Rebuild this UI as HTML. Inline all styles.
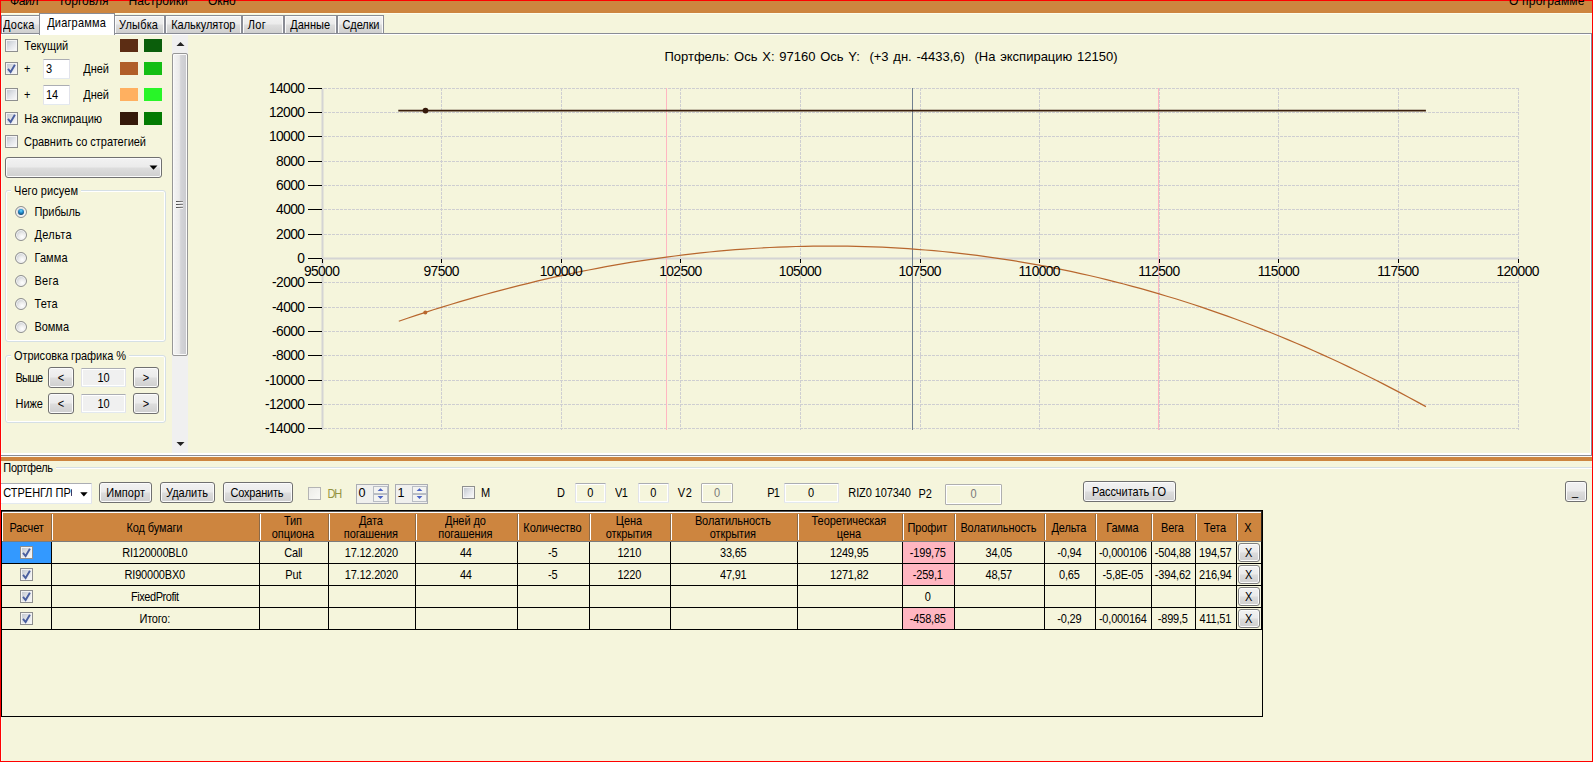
<!DOCTYPE html>
<html lang="ru">
<head>
<meta charset="utf-8">
<title>Портфель</title>
<style>
html,body{margin:0;padding:0;}
body{width:1593px;height:762px;overflow:hidden;background:#F5F5DC;font-family:"Liberation Sans",sans-serif;font-size:11px;color:#000;}
#root{position:relative;width:1593px;height:762px;overflow:hidden;background:#F5F5DC;}
#root div,#root span,#root svg{position:absolute;box-sizing:border-box;}
.t{white-space:pre;}
.btn{border:1px solid #707070;border-radius:3px;background:linear-gradient(#F2F2F2 0%,#EBEBEB 48%,#DDDDDD 52%,#CFCFCF 100%);box-shadow:inset 0 0 0 1px #FBFBFB;}
.tab{border:1px solid #898C95;border-bottom:none;background:linear-gradient(#F2F2F2 0%,#EBEBEB 48%,#DDDDDD 52%,#CFCFCF 100%);box-shadow:inset 1px 1px 0 0 #FBFBFB, inset -1px 0 0 0 #FBFBFB;}
.cb{width:13px;height:13px;border:1px solid #8E8F8F;background:#F4F4F4;box-shadow:inset 0 0 0 1px #F4F4F4;}
.cb i{position:absolute;left:1px;top:1px;width:9px;height:9px;background:linear-gradient(135deg,#C4C9D0 0%,#E4E6EA 55%,#F8F8F8 100%);box-sizing:border-box;}
.rb{width:12px;height:12px;border-radius:50%;border:1px solid #8E8F8F;background:radial-gradient(circle at 62% 68%,#FFFFFF 0%,#EBEBEB 38%,#BFC4CA 85%);box-shadow:inset 0 0 0 1px #F6F6F6;}
.tb{border:1px solid #E2E3EA;border-top-color:#ABADB3;border-bottom-color:#E3E9EF;background:#fff;border-radius:1px;}
.tbb{border:1px solid #E2E3EA;border-top-color:#ABADB3;border-bottom-color:#E3E9EF;background:#F5F5DC;border-radius:1px;box-shadow:inset 0 0 0 1px #FFFFFF;}
.tbd{border:1px solid #AFAFAF;background:#F5F5DC;border-radius:1px;box-shadow:inset 0 0 0 1px #FFFFFF;}
.sw{width:18px;height:13px;}
.gb{border:1px solid #D5DFE5;border-radius:3px;box-shadow:inset 0 0 0 1px #FFFFFF;}
.hl{background:#000;height:1px;}
.vl{background:#000;width:1px;}
</style>
</head>
<body>
<div id="root">
<div style="left:0;top:0;width:1593px;height:13px;background:#CD853F"></div>
<div style="left:1px;top:13px;width:1591px;height:1px;background:#FDFDEC"></div>
<div style="left:1px;top:33px;width:1591px;height:1px;background:#898C95"></div>
<div style="left:1px;top:34px;width:1590px;height:1px;background:#FFFFFF"></div>
<div style="left:1591px;top:33px;width:1px;height:423px;background:#898C95"></div>
<div style="left:1590px;top:34px;width:1px;height:421px;background:#FFFFFF"></div>
<div style="left:1px;top:453px;width:1590px;height:2px;background:#FFFFFF"></div>
<div style="left:1px;top:455px;width:1591px;height:1px;background:#898C95"></div>
<div style="left:1px;top:456px;width:1591px;height:1px;background:#FBFBF4"></div>
<div style="left:1px;top:457px;width:1591px;height:4px;background:#CD853F"></div>
<div style="left:1px;top:35px;width:1px;height:418px;background:#FAFAEE"></div>
<div style="left:1px;top:469px;width:1px;height:292px;background:#FAFAEE"></div>
<div class="tab" style="left:1px;top:15px;width:40px;height:18px"></div>
<div class="tab" style="left:114px;top:15px;width:51px;height:18px"></div>
<div class="tab" style="left:165px;top:15px;width:77px;height:18px"></div>
<div class="tab" style="left:242px;top:15px;width:42px;height:18px"></div>
<div class="tab" style="left:284px;top:15px;width:53px;height:18px"></div>
<div class="tab" style="left:337px;top:15px;width:47px;height:18px"></div>
<div style="left:39px;top:13px;width:76px;height:22px;background:#fff;border:1px solid #898C95;border-bottom:none"></div>
<div class="cb" style="left:5px;top:39px"><i></i></div>
<div class="sw" style="left:120px;top:39px;background:#5C2D14"></div>
<div class="sw" style="left:144px;top:39px;background:#0B5E0B"></div>
<div class="cb" style="left:5px;top:62px"><i></i><svg style="left:0;top:0" width="11" height="11" viewBox="0 0 11 11"><path d="M2.0 5.9 L4.6 9.0 L8.9 1.7" fill="none" stroke="#4A5F9F" stroke-width="1.9" stroke-linejoin="miter"/></svg></div>
<div class="tb" style="left:43px;top:59px;width:27px;height:20px"></div>
<div class="sw" style="left:120px;top:62px;background:#B05E28"></div>
<div class="sw" style="left:144px;top:62px;background:#14BE14"></div>
<div class="cb" style="left:5px;top:88px"><i></i></div>
<div class="tb" style="left:43px;top:85px;width:27px;height:20px"></div>
<div class="sw" style="left:120px;top:88px;background:#FFB060"></div>
<div class="sw" style="left:144px;top:88px;background:#28F528"></div>
<div class="cb" style="left:5px;top:112px"><i></i><svg style="left:0;top:0" width="11" height="11" viewBox="0 0 11 11"><path d="M2.0 5.9 L4.6 9.0 L8.9 1.7" fill="none" stroke="#4A5F9F" stroke-width="1.9" stroke-linejoin="miter"/></svg></div>
<div class="sw" style="left:120px;top:112px;background:#35190A"></div>
<div class="sw" style="left:144px;top:112px;background:#037B03"></div>
<div class="cb" style="left:5px;top:135px"><i></i></div>
<div class="btn" style="left:5px;top:157px;width:157px;height:21px"></div>
<svg style="left:149px;top:165px" width="9" height="6" viewBox="0 0 9 6"><path d="M0.5 0.5 L8.5 0.5 L4.5 4.8 Z" fill="#000"/></svg>
<div class="gb" style="left:5px;top:190px;width:161px;height:152px"></div>
<div style="left:11px;top:186px;width:70px;height:10px;background:#F5F5DC"></div>
<div class="rb" style="left:15px;top:206px"></div>
<div style="left:18px;top:209px;width:6px;height:6px;border-radius:50%;background:radial-gradient(circle at 50% 30%,#6FD8FF 0%,#2A9BDB 30%,#154C78 75%,#123D60 100%)"></div>
<div class="rb" style="left:15px;top:229px"></div>
<div class="rb" style="left:15px;top:252px"></div>
<div class="rb" style="left:15px;top:275px"></div>
<div class="rb" style="left:15px;top:298px"></div>
<div class="rb" style="left:15px;top:321px"></div>
<div class="gb" style="left:5px;top:355px;width:161px;height:68px"></div>
<div style="left:11px;top:351px;width:118px;height:10px;background:#F5F5DC"></div>
<div class="btn" style="left:48px;top:367px;width:26px;height:21px"></div>
<div class="tb" style="left:81px;top:368px;width:45px;height:19px;background:#F0F0F0;box-shadow:inset 0 0 0 1px #FFFFFF"></div>
<div class="btn" style="left:133px;top:367px;width:26px;height:21px"></div>
<div class="btn" style="left:48px;top:393px;width:26px;height:21px"></div>
<div class="tb" style="left:81px;top:394px;width:45px;height:19px;background:#F0F0F0;box-shadow:inset 0 0 0 1px #FFFFFF"></div>
<div class="btn" style="left:133px;top:393px;width:26px;height:21px"></div>
<div style="left:172px;top:35px;width:16px;height:418px;background:#F0F0F0"></div>
<div style="left:172px;top:53px;width:15.5px;height:303px;border:1px solid #979797;border-radius:2px;background:linear-gradient(90deg,#F5F5F5 0%,#EAEAEA 45%,#D4D4D8 55%,#C9CACE 100%);box-shadow:inset 0 0 0 1px #FAFAFA"></div>
<svg style="left:176px;top:41px" width="9" height="6" viewBox="0 0 9 6"><path d="M0.5 5 L4.5 1 L8.5 5 Z" fill="#222"/></svg>
<svg style="left:176px;top:441px" width="9" height="6" viewBox="0 0 9 6"><path d="M0.5 1 L4.5 5 L8.5 1 Z" fill="#222"/></svg>
<div style="left:176px;top:201px;width:7px;height:1px;background:linear-gradient(90deg,#4A4A4A,#8A8A8A)"></div>
<div style="left:176px;top:202px;width:7px;height:1px;background:#F4F4F4"></div>
<div style="left:176px;top:204px;width:7px;height:1px;background:linear-gradient(90deg,#4A4A4A,#8A8A8A)"></div>
<div style="left:176px;top:205px;width:7px;height:1px;background:#F4F4F4"></div>
<div style="left:176px;top:207px;width:7px;height:1px;background:linear-gradient(90deg,#4A4A4A,#8A8A8A)"></div>
<div style="left:176px;top:208px;width:7px;height:1px;background:#F4F4F4"></div>
<svg style="left:0;top:0" width="1593" height="762" viewBox="0 0 1593 762" font-family="Liberation Sans, sans-serif">
<path d="M324 88.5 H1519 M324 112.5 H1519 M324 136.5 H1519 M324 161.5 H1519 M324 185.5 H1519 M324 209.5 H1519 M324 234.5 H1519 M324 282.5 H1519 M324 307.5 H1519 M324 331.5 H1519 M324 355.5 H1519 M324 380.5 H1519 M324 404.5 H1519 M324 428.5 H1519 M441.5 88 V430 M561.5 88 V430 M680.5 88 V430 M800.5 88 V430 M920.5 88 V430 M1039.5 88 V430 M1159.5 88 V430 M1278.5 88 V430 M1398.5 88 V430 M1518.5 88 V430" stroke="#CECED1" stroke-width="1" stroke-dasharray="3 1" fill="none" shape-rendering="crispEdges"/>
<rect x="321.5" y="88" width="2" height="342" fill="#D4D4D4"/>
<rect x="322" y="257.5" width="1197" height="2" fill="#D4D4D4"/>
<path d="M308 88.5 H322 M308 112.5 H322 M308 136.5 H322 M308 161.5 H322 M308 185.5 H322 M308 209.5 H322 M308 234.5 H322 M308 258.5 H322 M308 282.5 H322 M308 307.5 H322 M308 331.5 H322 M308 355.5 H322 M308 380.5 H322 M308 404.5 H322 M308 428.5 H322 M322.5 259 V263 M441.5 259 V263 M561.5 259 V263 M680.5 259 V263 M800.5 259 V263 M920.5 259 V263 M1039.5 259 V263 M1159.5 259 V263 M1278.5 259 V263 M1398.5 259 V263 M1518.5 259 V263" stroke="#000" stroke-width="1" fill="none" shape-rendering="crispEdges"/>
<path d="M666.5 88 V430 M1158.5 88 V430" stroke="#FFB6C1" stroke-width="1" fill="none" shape-rendering="crispEdges"/>
<path d="M912.5 88 V430" stroke="#708090" stroke-width="1" fill="none" shape-rendering="crispEdges"/>
<path d="M398.8 321.2 L407.5 318.2 L416.1 315.4 L424.7 312.6 L433.4 309.8 L442.0 307.1 L450.6 304.5 L459.2 301.9 L467.9 299.4 L476.5 296.9 L485.1 294.5 L493.8 292.2 L502.4 289.9 L511.0 287.6 L519.7 285.4 L528.3 283.3 L536.9 281.2 L545.5 279.2 L554.2 277.2 L562.8 275.3 L571.4 273.5 L580.1 271.7 L588.7 270.0 L597.3 268.3 L606.0 266.7 L614.6 265.2 L623.2 263.7 L631.9 262.2 L640.5 260.9 L649.1 259.6 L657.7 258.3 L666.4 257.1 L675.0 256.0 L683.6 254.9 L692.3 253.9 L700.9 252.9 L709.5 252.0 L718.2 251.2 L726.8 250.4 L735.4 249.7 L744.1 249.1 L752.7 248.5 L761.3 248.0 L769.9 247.5 L778.6 247.1 L787.2 246.8 L795.8 246.5 L804.5 246.3 L813.1 246.1 L821.7 246.1 L830.4 246.0 L839.0 246.1 L847.6 246.2 L856.2 246.3 L864.9 246.6 L873.5 246.9 L882.1 247.2 L890.8 247.6 L899.4 248.1 L908.0 248.7 L916.7 249.3 L925.3 250.0 L933.9 250.7 L942.6 251.5 L951.2 252.4 L959.8 253.4 L968.4 254.4 L977.1 255.4 L985.7 256.6 L994.3 257.8 L1003.0 259.1 L1011.6 260.4 L1020.2 261.8 L1028.9 263.3 L1037.5 264.8 L1046.1 266.4 L1054.7 268.1 L1063.4 269.9 L1072.0 271.7 L1080.6 273.6 L1089.3 275.5 L1097.9 277.5 L1106.5 279.6 L1115.2 281.8 L1123.8 284.0 L1132.4 286.3 L1141.1 288.6 L1149.7 291.1 L1158.3 293.6 L1166.9 296.2 L1175.6 298.8 L1184.2 301.5 L1192.8 304.3 L1201.5 307.1 L1210.1 310.1 L1218.7 313.1 L1227.4 316.1 L1236.0 319.3 L1244.6 322.5 L1253.3 325.7 L1261.9 329.1 L1270.5 332.5 L1279.1 336.0 L1287.8 339.6 L1296.4 343.2 L1305.0 346.9 L1313.7 350.7 L1322.3 354.6 L1330.9 358.5 L1339.6 362.5 L1348.2 366.6 L1356.8 370.7 L1365.4 375.0 L1374.1 379.3 L1382.7 383.6 L1391.3 388.1 L1400.0 392.6 L1408.6 397.2 L1417.2 401.9 L1425.9 406.6" stroke="#B8672E" stroke-width="1.2" fill="none"/>
<circle cx="425.3" cy="312.4" r="2" fill="#B8672E"/>
<path d="M398.3 110.6 H1425.9" stroke="#3A1E0C" stroke-width="1.9" fill="none"/>
<circle cx="425.5" cy="110.6" r="2.9" fill="#35190A"/>
<text x="304.3" y="93.0" font-size="13.8" text-anchor="end" fill="#000" letter-spacing="-0.62">14000</text>
<text x="304.3" y="117.0" font-size="13.8" text-anchor="end" fill="#000" letter-spacing="-0.62">12000</text>
<text x="304.3" y="141.0" font-size="13.8" text-anchor="end" fill="#000" letter-spacing="-0.62">10000</text>
<text x="304.3" y="166.0" font-size="13.8" text-anchor="end" fill="#000" letter-spacing="-0.62">8000</text>
<text x="304.3" y="190.0" font-size="13.8" text-anchor="end" fill="#000" letter-spacing="-0.62">6000</text>
<text x="304.3" y="214.0" font-size="13.8" text-anchor="end" fill="#000" letter-spacing="-0.62">4000</text>
<text x="304.3" y="239.0" font-size="13.8" text-anchor="end" fill="#000" letter-spacing="-0.62">2000</text>
<text x="304.3" y="263.0" font-size="13.8" text-anchor="end" fill="#000" letter-spacing="-0.62">0</text>
<text x="304.3" y="287.0" font-size="13.8" text-anchor="end" fill="#000" letter-spacing="-0.62">-2000</text>
<text x="304.3" y="312.0" font-size="13.8" text-anchor="end" fill="#000" letter-spacing="-0.62">-4000</text>
<text x="304.3" y="336.0" font-size="13.8" text-anchor="end" fill="#000" letter-spacing="-0.62">-6000</text>
<text x="304.3" y="360.0" font-size="13.8" text-anchor="end" fill="#000" letter-spacing="-0.62">-8000</text>
<text x="304.3" y="385.0" font-size="13.8" text-anchor="end" fill="#000" letter-spacing="-0.62">-10000</text>
<text x="304.3" y="409.0" font-size="13.8" text-anchor="end" fill="#000" letter-spacing="-0.62">-12000</text>
<text x="304.3" y="433.0" font-size="13.8" text-anchor="end" fill="#000" letter-spacing="-0.62">-14000</text>
<text x="321.6" y="276.2" font-size="13.8" text-anchor="middle" fill="#000" letter-spacing="-0.62">95000</text>
<text x="441.2" y="276.2" font-size="13.8" text-anchor="middle" fill="#000" letter-spacing="-0.62">97500</text>
<text x="560.8" y="276.2" font-size="13.8" text-anchor="middle" fill="#000" letter-spacing="-0.62">100000</text>
<text x="680.4" y="276.2" font-size="13.8" text-anchor="middle" fill="#000" letter-spacing="-0.62">102500</text>
<text x="800.0" y="276.2" font-size="13.8" text-anchor="middle" fill="#000" letter-spacing="-0.62">105000</text>
<text x="919.6" y="276.2" font-size="13.8" text-anchor="middle" fill="#000" letter-spacing="-0.62">107500</text>
<text x="1039.2" y="276.2" font-size="13.8" text-anchor="middle" fill="#000" letter-spacing="-0.62">110000</text>
<text x="1158.8" y="276.2" font-size="13.8" text-anchor="middle" fill="#000" letter-spacing="-0.62">112500</text>
<text x="1278.4" y="276.2" font-size="13.8" text-anchor="middle" fill="#000" letter-spacing="-0.62">115000</text>
<text x="1398.0" y="276.2" font-size="13.8" text-anchor="middle" fill="#000" letter-spacing="-0.62">117500</text>
<text x="1517.6" y="276.2" font-size="13.8" text-anchor="middle" fill="#000" letter-spacing="-0.62">120000</text>
<text x="891" y="61" font-size="13" text-anchor="middle" fill="#000" style="word-spacing:1.15px" xml:space="preserve">Портфель: Ось X: 97160 Ось Y:  (+3 дн. -4433,6)  (На экспирацию 12150)</text>
</svg>
<div style="left:1px;top:467px;width:1591px;height:1px;background:#D5DFE5"></div>
<div style="left:1px;top:468px;width:1591px;height:1px;background:#FFFFFF"></div>
<div style="left:1px;top:462px;width:55px;height:12px;background:#F5F5DC"></div>
<div class="tb" style="left:-2px;top:483px;width:94px;height:21px"></div>
<div style="left:71px;top:489px;width:1px;height:7px;background:#3A3A66;border-radius:0.5px"></div>
<svg style="left:79.5px;top:491.6px" width="9" height="6" viewBox="0 0 9 6"><path d="M0.2 0.3 L7.6 0.3 L3.9 4.4 Z" fill="#000"/></svg>
<div class="btn" style="left:99px;top:482px;width:53px;height:21px"></div>
<div class="btn" style="left:160px;top:482px;width:55px;height:21px"></div>
<div class="btn" style="left:223px;top:482px;width:70px;height:21px"></div>
<div style="left:308px;top:487px;width:13px;height:13px;border:1px solid #B4B4B4;background:linear-gradient(135deg,#ECECE8,#FAFAF6)"></div>
<div style="left:356px;top:484px;width:33px;height:20px;background:#F0F0EE;border:1px solid #ABADB3"></div>
<div style="left:373px;top:486px;width:15px;height:8px;background:#F3F3F1;border:1px solid #B9BDC4"></div>
<div style="left:373px;top:494px;width:15px;height:8px;background:#F3F3F1;border:1px solid #B9BDC4"></div>
<svg style="left:377px;top:488px" width="7" height="12" viewBox="0 0 7 12"><path d="M0.6 3 L3.5 0.2 L6.4 3 Z M0.6 8.1 L3.5 10.9 L6.4 8.1 Z" fill="#4A62C4"/></svg>
<div style="left:395px;top:484px;width:33px;height:20px;background:#F0F0EE;border:1px solid #ABADB3"></div>
<div style="left:412px;top:486px;width:15px;height:8px;background:#F3F3F1;border:1px solid #B9BDC4"></div>
<div style="left:412px;top:494px;width:15px;height:8px;background:#F3F3F1;border:1px solid #B9BDC4"></div>
<svg style="left:416px;top:488px" width="7" height="12" viewBox="0 0 7 12"><path d="M0.6 3 L3.5 0.2 L6.4 3 Z M0.6 8.1 L3.5 10.9 L6.4 8.1 Z" fill="#4A62C4"/></svg>
<div class="cb" style="left:462px;top:486px"><i></i></div>
<div class="tbb" style="left:575px;top:483px;width:31px;height:20px"></div>
<div class="tbb" style="left:638px;top:483px;width:31px;height:20px"></div>
<div class="tbd" style="left:701px;top:483px;width:32px;height:20px"></div>
<div class="tbb" style="left:784px;top:483px;width:55px;height:20px"></div>
<div class="tbd" style="left:945px;top:484px;width:57px;height:21px"></div>
<div class="btn" style="left:1083px;top:481px;width:93px;height:21px"></div>
<div class="btn" style="left:1565px;top:481px;width:22px;height:21px"></div>
<div style="left:1px;top:510px;width:1262px;height:207px;border:1px solid #000"></div>
<div style="left:2px;top:511px;width:1260px;height:30px;background:#CD853F"></div>
<div style="left:2px;top:511px;width:1260px;height:1px;background:#555555"></div>
<div style="left:2px;top:512px;width:1260px;height:1px;background:#FFFFFF"></div>
<div style="left:2px;top:541px;width:1260px;height:1px;background:#7C7C7C"></div>
<div style="left:2px;top:512px;width:1px;height:29px;background:#FFFFFF"></div>
<div style="left:51px;top:514px;width:1px;height:26px;background:#8C6A48"></div>
<div style="left:52px;top:514px;width:1px;height:26px;background:#FFFFFF"></div>
<div style="left:259px;top:514px;width:1px;height:26px;background:#8C6A48"></div>
<div style="left:260px;top:514px;width:1px;height:26px;background:#FFFFFF"></div>
<div style="left:328px;top:514px;width:1px;height:26px;background:#8C6A48"></div>
<div style="left:329px;top:514px;width:1px;height:26px;background:#FFFFFF"></div>
<div style="left:415px;top:514px;width:1px;height:26px;background:#8C6A48"></div>
<div style="left:416px;top:514px;width:1px;height:26px;background:#FFFFFF"></div>
<div style="left:517px;top:514px;width:1px;height:26px;background:#8C6A48"></div>
<div style="left:518px;top:514px;width:1px;height:26px;background:#FFFFFF"></div>
<div style="left:589px;top:514px;width:1px;height:26px;background:#8C6A48"></div>
<div style="left:590px;top:514px;width:1px;height:26px;background:#FFFFFF"></div>
<div style="left:670px;top:514px;width:1px;height:26px;background:#8C6A48"></div>
<div style="left:671px;top:514px;width:1px;height:26px;background:#FFFFFF"></div>
<div style="left:797px;top:514px;width:1px;height:26px;background:#8C6A48"></div>
<div style="left:798px;top:514px;width:1px;height:26px;background:#FFFFFF"></div>
<div style="left:902px;top:514px;width:1px;height:26px;background:#8C6A48"></div>
<div style="left:903px;top:514px;width:1px;height:26px;background:#FFFFFF"></div>
<div style="left:954px;top:514px;width:1px;height:26px;background:#8C6A48"></div>
<div style="left:955px;top:514px;width:1px;height:26px;background:#FFFFFF"></div>
<div style="left:1044px;top:514px;width:1px;height:26px;background:#8C6A48"></div>
<div style="left:1045px;top:514px;width:1px;height:26px;background:#FFFFFF"></div>
<div style="left:1095px;top:514px;width:1px;height:26px;background:#8C6A48"></div>
<div style="left:1096px;top:514px;width:1px;height:26px;background:#FFFFFF"></div>
<div style="left:1151px;top:514px;width:1px;height:26px;background:#8C6A48"></div>
<div style="left:1152px;top:514px;width:1px;height:26px;background:#FFFFFF"></div>
<div style="left:1195px;top:514px;width:1px;height:26px;background:#8C6A48"></div>
<div style="left:1196px;top:514px;width:1px;height:26px;background:#FFFFFF"></div>
<div style="left:1236px;top:514px;width:1px;height:26px;background:#8C6A48"></div>
<div style="left:1237px;top:514px;width:1px;height:26px;background:#FFFFFF"></div>
<div style="left:1261px;top:511px;width:1px;height:31px;background:#2A2018"></div>
<div class="hl" style="left:2px;top:563px;width:1260px"></div>
<div style="left:2px;top:542px;width:49px;height:21px;background:#3399FF"></div>
<div style="left:903px;top:542px;width:51px;height:21px;background:#FFB6C1"></div>
<div class="cb" style="left:20px;top:546px"><i></i><svg style="left:0;top:0" width="11" height="11" viewBox="0 0 11 11"><path d="M2.0 5.9 L4.6 9.0 L8.9 1.7" fill="none" stroke="#4A5F9F" stroke-width="1.9" stroke-linejoin="miter"/></svg></div>
<div class="btn" style="left:1238px;top:543px;width:22px;height:19px;border-color:#7F7F7F"></div>
<div class="hl" style="left:2px;top:585px;width:1260px"></div>
<div style="left:903px;top:564px;width:51px;height:21px;background:#FFB6C1"></div>
<div class="cb" style="left:20px;top:568px"><i></i><svg style="left:0;top:0" width="11" height="11" viewBox="0 0 11 11"><path d="M2.0 5.9 L4.6 9.0 L8.9 1.7" fill="none" stroke="#4A5F9F" stroke-width="1.9" stroke-linejoin="miter"/></svg></div>
<div class="btn" style="left:1238px;top:565px;width:22px;height:19px;border-color:#7F7F7F"></div>
<div class="hl" style="left:2px;top:607px;width:1260px"></div>
<div class="cb" style="left:20px;top:590px"><i></i><svg style="left:0;top:0" width="11" height="11" viewBox="0 0 11 11"><path d="M2.0 5.9 L4.6 9.0 L8.9 1.7" fill="none" stroke="#4A5F9F" stroke-width="1.9" stroke-linejoin="miter"/></svg></div>
<div class="btn" style="left:1238px;top:587px;width:22px;height:19px;border-color:#7F7F7F"></div>
<div class="hl" style="left:2px;top:629px;width:1260px"></div>
<div style="left:903px;top:608px;width:51px;height:21px;background:#FFB6C1"></div>
<div class="cb" style="left:20px;top:612px"><i></i><svg style="left:0;top:0" width="11" height="11" viewBox="0 0 11 11"><path d="M2.0 5.9 L4.6 9.0 L8.9 1.7" fill="none" stroke="#4A5F9F" stroke-width="1.9" stroke-linejoin="miter"/></svg></div>
<div class="btn" style="left:1238px;top:609px;width:22px;height:19px;border-color:#7F7F7F"></div>
<div class="vl" style="left:51px;top:542px;width:1px;height:88px"></div>
<div class="vl" style="left:259px;top:542px;width:1px;height:88px"></div>
<div class="vl" style="left:328px;top:542px;width:1px;height:88px"></div>
<div class="vl" style="left:415px;top:542px;width:1px;height:88px"></div>
<div class="vl" style="left:517px;top:542px;width:1px;height:88px"></div>
<div class="vl" style="left:589px;top:542px;width:1px;height:88px"></div>
<div class="vl" style="left:670px;top:542px;width:1px;height:88px"></div>
<div class="vl" style="left:797px;top:542px;width:1px;height:88px"></div>
<div class="vl" style="left:902px;top:542px;width:1px;height:88px"></div>
<div class="vl" style="left:954px;top:542px;width:1px;height:88px"></div>
<div class="vl" style="left:1044px;top:542px;width:1px;height:88px"></div>
<div class="vl" style="left:1095px;top:542px;width:1px;height:88px"></div>
<div class="vl" style="left:1151px;top:542px;width:1px;height:88px"></div>
<div class="vl" style="left:1195px;top:542px;width:1px;height:88px"></div>
<div class="vl" style="left:1236px;top:542px;width:1px;height:88px"></div>
<div class="vl" style="left:1261px;top:542px;width:1px;height:88px"></div>
<div style="left:0;top:0;width:1593px;height:1px;background:#FF0000"></div>
<div style="left:0;top:761px;width:1593px;height:1px;background:#FF0000"></div>
<div style="left:0;top:0;width:1px;height:762px;background:#FF0000"></div>
<div style="left:1592px;top:0;width:1px;height:762px;background:#FF0000"></div>
<span class="t" id="t0" style="top:18.74px;font-size:11px;line-height:12.29px;color:#000;left:3.00px;letter-spacing:0.281px;transform:scaleY(1.12);transform-origin:0 9.96px;">Доска</span>
<span class="t" id="t1" style="top:18.74px;font-size:11px;line-height:12.29px;color:#000;left:119.00px;letter-spacing:0.188px;transform:scaleY(1.12);transform-origin:0 9.96px;">Улыбка</span>
<span class="t" id="t2" style="top:18.74px;font-size:11px;line-height:12.29px;color:#000;left:171.20px;letter-spacing:-0.021px;transform:scaleY(1.12);transform-origin:0 9.96px;">Калькулятор</span>
<span class="t" id="t3" style="top:18.74px;font-size:11px;line-height:12.29px;color:#000;left:247.80px;letter-spacing:0.320px;transform:scaleY(1.12);transform-origin:0 9.96px;">Лог</span>
<span class="t" id="t4" style="top:18.74px;font-size:11px;line-height:12.29px;color:#000;left:290.20px;letter-spacing:0.050px;transform:scaleY(1.12);transform-origin:0 9.96px;">Данные</span>
<span class="t" id="t5" style="top:18.74px;font-size:11px;line-height:12.29px;color:#000;left:342.50px;letter-spacing:-0.100px;transform:scaleY(1.12);transform-origin:0 9.96px;">Сделки</span>
<span class="t" id="t6" style="top:16.95px;font-size:11px;line-height:12.29px;color:#000;left:47.20px;letter-spacing:0.175px;transform:scaleY(1.12);transform-origin:0 9.96px;">Диаграмма</span>
<span class="t" id="t7" style="top:-4.96px;font-size:12px;line-height:13.40px;color:#000;left:10.10px;letter-spacing:-0.405px;">Файл</span>
<span class="t" id="t8" style="top:-4.96px;font-size:12px;line-height:13.40px;color:#000;left:58.00px;letter-spacing:0.051px;">Торговля</span>
<span class="t" id="t9" style="top:-4.96px;font-size:12px;line-height:13.40px;color:#000;left:128.60px;letter-spacing:0.032px;">Настройки</span>
<span class="t" id="t10" style="top:-4.96px;font-size:12px;line-height:13.40px;color:#000;left:208.00px;letter-spacing:-0.030px;">Окно</span>
<span class="t" id="t11" style="top:-4.96px;font-size:12px;line-height:13.40px;color:#000;left:1509.00px;letter-spacing:0.208px;">О программе</span>
<span class="t" id="t12" style="top:40.05px;font-size:11px;line-height:12.29px;color:#000;left:24.30px;letter-spacing:-0.017px;transform:scaleY(1.12);transform-origin:0 9.96px;">Текущий</span>
<span class="t" id="t13" style="top:63.05px;font-size:11px;line-height:12.29px;color:#000;left:24.00px;letter-spacing:0.000px;transform:scaleY(1.12);transform-origin:0 9.96px;">+</span>
<span class="t" id="t14" style="top:63.05px;font-size:11px;line-height:12.29px;color:#000;left:46.00px;letter-spacing:0.000px;transform:scaleY(1.12);transform-origin:0 9.96px;">3</span>
<span class="t" id="t15" style="top:63.05px;font-size:11px;line-height:12.29px;color:#000;left:83.20px;letter-spacing:0.001px;transform:scaleY(1.12);transform-origin:0 9.96px;">Дней</span>
<span class="t" id="t16" style="top:89.05px;font-size:11px;line-height:12.29px;color:#000;left:24.00px;letter-spacing:0.000px;transform:scaleY(1.12);transform-origin:0 9.96px;">+</span>
<span class="t" id="t17" style="top:89.05px;font-size:11px;line-height:12.29px;color:#000;left:46.00px;letter-spacing:0.000px;transform:scaleY(1.12);transform-origin:0 9.96px;">14</span>
<span class="t" id="t18" style="top:89.05px;font-size:11px;line-height:12.29px;color:#000;left:83.20px;letter-spacing:0.001px;transform:scaleY(1.12);transform-origin:0 9.96px;">Дней</span>
<span class="t" id="t19" style="top:113.05px;font-size:11px;line-height:12.29px;color:#000;left:24.30px;letter-spacing:-0.042px;transform:scaleY(1.12);transform-origin:0 9.96px;">На экспирацию</span>
<span class="t" id="t20" style="top:136.04px;font-size:11px;line-height:12.29px;color:#000;left:24.00px;letter-spacing:-0.041px;transform:scaleY(1.12);transform-origin:0 9.96px;">Сравнить со стратегией</span>
<span class="t" id="t21" style="top:185.04px;font-size:11px;line-height:12.29px;color:#000;left:14.00px;letter-spacing:0.078px;transform:scaleY(1.12);transform-origin:0 9.96px;">Чего рисуем</span>
<span class="t" id="t22" style="top:206.04px;font-size:11px;line-height:12.29px;color:#000;left:34.50px;letter-spacing:-0.089px;transform:scaleY(1.12);transform-origin:0 9.96px;">Прибыль</span>
<span class="t" id="t23" style="top:229.04px;font-size:11px;line-height:12.29px;color:#000;left:34.50px;letter-spacing:0.294px;transform:scaleY(1.12);transform-origin:0 9.96px;">Дельта</span>
<span class="t" id="t24" style="top:252.04px;font-size:11px;line-height:12.29px;color:#000;left:34.50px;letter-spacing:0.074px;transform:scaleY(1.12);transform-origin:0 9.96px;">Гамма</span>
<span class="t" id="t25" style="top:275.05px;font-size:11px;line-height:12.29px;color:#000;left:34.50px;letter-spacing:0.219px;transform:scaleY(1.12);transform-origin:0 9.96px;">Вега</span>
<span class="t" id="t26" style="top:298.05px;font-size:11px;line-height:12.29px;color:#000;left:34.50px;letter-spacing:0.036px;transform:scaleY(1.12);transform-origin:0 9.96px;">Тета</span>
<span class="t" id="t27" style="top:321.05px;font-size:11px;line-height:12.29px;color:#000;left:34.50px;letter-spacing:-0.051px;transform:scaleY(1.12);transform-origin:0 9.96px;">Вомма</span>
<span class="t" id="t28" style="top:350.05px;font-size:11px;line-height:12.29px;color:#000;left:14.00px;letter-spacing:-0.062px;transform:scaleY(1.12);transform-origin:0 9.96px;">Отрисовка графика %</span>
<span class="t" id="t29" style="top:372.05px;font-size:11px;line-height:12.29px;color:#000;left:15.50px;letter-spacing:-0.896px;transform:scaleY(1.12);transform-origin:0 9.96px;">Выше</span>
<span class="t" id="t30" style="top:372.05px;font-size:11px;line-height:12.29px;color:#000;left:57.78px;letter-spacing:0.000px;transform:scaleY(1.12);transform-origin:0 9.96px;">&lt;</span>
<span class="t" id="t31" style="top:372.05px;font-size:11px;line-height:12.29px;color:#000;left:97.38px;letter-spacing:0.000px;transform:scaleY(1.12);transform-origin:0 9.96px;">10</span>
<span class="t" id="t32" style="top:372.05px;font-size:11px;line-height:12.29px;color:#000;left:142.78px;letter-spacing:0.000px;transform:scaleY(1.12);transform-origin:0 9.96px;">&gt;</span>
<span class="t" id="t33" style="top:398.05px;font-size:11px;line-height:12.29px;color:#000;left:15.50px;letter-spacing:-0.026px;transform:scaleY(1.12);transform-origin:0 9.96px;">Ниже</span>
<span class="t" id="t34" style="top:398.05px;font-size:11px;line-height:12.29px;color:#000;left:57.78px;letter-spacing:0.000px;transform:scaleY(1.12);transform-origin:0 9.96px;">&lt;</span>
<span class="t" id="t35" style="top:398.05px;font-size:11px;line-height:12.29px;color:#000;left:97.38px;letter-spacing:0.000px;transform:scaleY(1.12);transform-origin:0 9.96px;">10</span>
<span class="t" id="t36" style="top:398.05px;font-size:11px;line-height:12.29px;color:#000;left:142.78px;letter-spacing:0.000px;transform:scaleY(1.12);transform-origin:0 9.96px;">&gt;</span>
<span class="t" id="t37" style="top:462.05px;font-size:11px;line-height:12.29px;color:#000;left:3.30px;letter-spacing:-0.313px;transform:scaleY(1.12);transform-origin:0 9.96px;">Портфель</span>
<span class="t" id="t38" style="top:486.85px;font-size:11px;line-height:12.29px;color:#000;left:3.30px;letter-spacing:-0.031px;transform:scaleY(1.12);transform-origin:0 9.96px;">СТРЕНГЛ ПР</span>
<span class="t" id="t39" style="top:486.55px;font-size:11px;line-height:12.29px;color:#000;left:106.30px;letter-spacing:0.046px;transform:scaleY(1.12);transform-origin:0 9.96px;">Импорт</span>
<span class="t" id="t40" style="top:486.55px;font-size:11px;line-height:12.29px;color:#000;left:166.00px;letter-spacing:0.000px;transform:scaleY(1.12);transform-origin:0 9.96px;">Удалить</span>
<span class="t" id="t41" style="top:486.55px;font-size:11px;line-height:12.29px;color:#000;left:230.50px;letter-spacing:-0.209px;transform:scaleY(1.12);transform-origin:0 9.96px;">Сохранить</span>
<span class="t" id="t42" style="top:487.65px;font-size:11px;line-height:12.29px;color:#94943F;left:327.40px;letter-spacing:-0.991px;transform:scaleY(1.12);transform-origin:0 9.96px;">DH</span>
<span class="t" id="t43" style="top:485.60px;font-size:12.6px;line-height:14.07px;color:#000;left:358.40px;letter-spacing:0.000px;letter-spacing:-0.5px;">0</span>
<span class="t" id="t44" style="top:485.60px;font-size:12.6px;line-height:14.07px;color:#000;left:397.40px;letter-spacing:0.000px;letter-spacing:-0.5px;">1</span>
<span class="t" id="t45" style="top:486.55px;font-size:11px;line-height:12.29px;color:#000;left:481.00px;letter-spacing:0.000px;transform:scaleY(1.12);transform-origin:0 9.96px;">M</span>
<span class="t" id="t46" style="top:486.55px;font-size:11px;line-height:12.29px;color:#000;left:557.00px;letter-spacing:0.000px;transform:scaleY(1.12);transform-origin:0 9.96px;">D</span>
<span class="t" id="t47" style="top:486.55px;font-size:11px;line-height:12.29px;color:#000;left:587.24px;letter-spacing:0.000px;transform:scaleY(1.12);transform-origin:0 9.96px;">0</span>
<span class="t" id="t48" style="top:486.55px;font-size:11px;line-height:12.29px;color:#000;left:615.00px;letter-spacing:-0.469px;transform:scaleY(1.12);transform-origin:0 9.96px;">V1</span>
<span class="t" id="t49" style="top:486.55px;font-size:11px;line-height:12.29px;color:#000;left:650.24px;letter-spacing:0.000px;transform:scaleY(1.12);transform-origin:0 9.96px;">0</span>
<span class="t" id="t50" style="top:486.55px;font-size:11px;line-height:12.29px;color:#000;left:677.70px;letter-spacing:0.831px;transform:scaleY(1.12);transform-origin:0 9.96px;">V2</span>
<span class="t" id="t51" style="top:486.55px;font-size:11px;line-height:12.29px;color:#7A7A7A;left:713.94px;letter-spacing:0.000px;transform:scaleY(1.12);transform-origin:0 9.96px;">0</span>
<span class="t" id="t52" style="top:486.55px;font-size:11px;line-height:12.29px;color:#000;left:767.30px;letter-spacing:-0.769px;transform:scaleY(1.12);transform-origin:0 9.96px;">P1</span>
<span class="t" id="t53" style="top:486.55px;font-size:11px;line-height:12.29px;color:#000;left:807.94px;letter-spacing:0.000px;transform:scaleY(1.12);transform-origin:0 9.96px;">0</span>
<span class="t" id="t54" style="top:486.55px;font-size:11px;line-height:12.29px;color:#000;left:848.30px;letter-spacing:-0.091px;transform:scaleY(1.12);transform-origin:0 9.96px;">RIZ0 107340</span>
<span class="t" id="t55" style="top:487.55px;font-size:11px;line-height:12.29px;color:#000;left:918.50px;letter-spacing:0.031px;transform:scaleY(1.12);transform-origin:0 9.96px;">P2</span>
<span class="t" id="t56" style="top:487.55px;font-size:11px;line-height:12.29px;color:#7A7A7A;left:970.44px;letter-spacing:0.000px;transform:scaleY(1.12);transform-origin:0 9.96px;">0</span>
<span class="t" id="t57" style="top:485.55px;font-size:11px;line-height:12.29px;color:#000;left:1092.00px;letter-spacing:-0.030px;transform:scaleY(1.12);transform-origin:0 9.96px;">Рассчитать ГО</span>
<span class="t" id="t58" style="top:485.25px;font-size:11px;line-height:12.29px;color:#000;left:1571.94px;letter-spacing:0.000px;transform:scaleY(1.12);transform-origin:0 9.96px;">_</span>
<span class="t" id="t59" style="top:522.04px;font-size:11px;line-height:12.29px;color:#000;left:9.40px;letter-spacing:0.000px;transform:scaleY(1.12);transform-origin:0 9.96px;letter-spacing:-0.1px;">Расчет</span>
<span class="t" id="t60" style="top:522.04px;font-size:11px;line-height:12.29px;color:#000;left:126.38px;letter-spacing:0.000px;transform:scaleY(1.12);transform-origin:0 9.96px;letter-spacing:-0.1px;">Код бумаги</span>
<span class="t" id="t61" style="top:515.04px;font-size:11px;line-height:12.29px;color:#000;left:283.88px;letter-spacing:0.000px;transform:scaleY(1.12);transform-origin:0 9.96px;letter-spacing:-0.1px;">Тип</span>
<span class="t" id="t62" style="top:528.04px;font-size:11px;line-height:12.29px;color:#000;left:271.83px;letter-spacing:0.000px;transform:scaleY(1.12);transform-origin:0 9.96px;letter-spacing:-0.1px;">опциона</span>
<span class="t" id="t63" style="top:515.04px;font-size:11px;line-height:12.29px;color:#000;left:358.92px;letter-spacing:0.000px;transform:scaleY(1.12);transform-origin:0 9.96px;letter-spacing:-0.1px;">Дата</span>
<span class="t" id="t64" style="top:528.04px;font-size:11px;line-height:12.29px;color:#000;left:343.81px;letter-spacing:0.000px;transform:scaleY(1.12);transform-origin:0 9.96px;letter-spacing:-0.1px;">погашения</span>
<span class="t" id="t65" style="top:515.04px;font-size:11px;line-height:12.29px;color:#000;left:445.06px;letter-spacing:0.000px;transform:scaleY(1.12);transform-origin:0 9.96px;letter-spacing:-0.1px;">Дней до</span>
<span class="t" id="t66" style="top:528.04px;font-size:11px;line-height:12.29px;color:#000;left:438.31px;letter-spacing:0.000px;transform:scaleY(1.12);transform-origin:0 9.96px;letter-spacing:-0.1px;">погашения</span>
<span class="t" id="t67" style="top:522.04px;font-size:11px;line-height:12.29px;color:#000;left:523.36px;letter-spacing:0.000px;transform:scaleY(1.12);transform-origin:0 9.96px;letter-spacing:-0.1px;">Количество</span>
<span class="t" id="t68" style="top:515.04px;font-size:11px;line-height:12.29px;color:#000;left:615.87px;letter-spacing:0.000px;transform:scaleY(1.12);transform-origin:0 9.96px;letter-spacing:-0.1px;">Цена</span>
<span class="t" id="t69" style="top:528.04px;font-size:11px;line-height:12.29px;color:#000;left:605.85px;letter-spacing:0.000px;transform:scaleY(1.12);transform-origin:0 9.96px;letter-spacing:-0.1px;">открытия</span>
<span class="t" id="t70" style="top:515.04px;font-size:11px;line-height:12.29px;color:#000;left:694.89px;letter-spacing:0.000px;transform:scaleY(1.12);transform-origin:0 9.96px;letter-spacing:-0.1px;">Волатильность</span>
<span class="t" id="t71" style="top:528.04px;font-size:11px;line-height:12.29px;color:#000;left:709.85px;letter-spacing:0.000px;transform:scaleY(1.12);transform-origin:0 9.96px;letter-spacing:-0.1px;">открытия</span>
<span class="t" id="t72" style="top:515.04px;font-size:11px;line-height:12.29px;color:#000;left:811.61px;letter-spacing:0.000px;transform:scaleY(1.12);transform-origin:0 9.96px;letter-spacing:-0.1px;">Теоретическая</span>
<span class="t" id="t73" style="top:528.04px;font-size:11px;line-height:12.29px;color:#000;left:836.85px;letter-spacing:0.000px;transform:scaleY(1.12);transform-origin:0 9.96px;letter-spacing:-0.1px;">цена</span>
<span class="t" id="t74" style="top:522.04px;font-size:11px;line-height:12.29px;color:#000;left:907.51px;letter-spacing:0.000px;transform:scaleY(1.12);transform-origin:0 9.96px;letter-spacing:-0.1px;">Профит</span>
<span class="t" id="t75" style="top:522.04px;font-size:11px;line-height:12.29px;color:#000;left:960.39px;letter-spacing:0.000px;transform:scaleY(1.12);transform-origin:0 9.96px;letter-spacing:-0.1px;">Волатильность</span>
<span class="t" id="t76" style="top:522.04px;font-size:11px;line-height:12.29px;color:#000;left:1051.43px;letter-spacing:0.000px;transform:scaleY(1.12);transform-origin:0 9.96px;letter-spacing:-0.1px;">Дельта</span>
<span class="t" id="t77" style="top:522.04px;font-size:11px;line-height:12.29px;color:#000;left:1106.30px;letter-spacing:0.000px;transform:scaleY(1.12);transform-origin:0 9.96px;letter-spacing:-0.1px;">Гамма</span>
<span class="t" id="t78" style="top:522.04px;font-size:11px;line-height:12.29px;color:#000;left:1160.92px;letter-spacing:0.000px;transform:scaleY(1.12);transform-origin:0 9.96px;letter-spacing:-0.1px;">Вега</span>
<span class="t" id="t79" style="top:522.04px;font-size:11px;line-height:12.29px;color:#000;left:1203.65px;letter-spacing:0.000px;transform:scaleY(1.12);transform-origin:0 9.96px;letter-spacing:-0.1px;">Тета</span>
<span class="t" id="t80" style="top:522.04px;font-size:11px;line-height:12.29px;color:#000;left:1244.28px;letter-spacing:0.000px;transform:scaleY(1.12);transform-origin:0 9.96px;letter-spacing:-0.1px;">X</span>
<span class="t" id="t81" style="top:547.04px;font-size:11px;line-height:12.29px;color:#000;left:122.25px;letter-spacing:0.000px;transform:scaleY(1.12);transform-origin:0 9.96px;letter-spacing:-0.2px;">RI120000BL0</span>
<span class="t" id="t82" style="top:547.04px;font-size:11px;line-height:12.29px;color:#000;left:284.22px;letter-spacing:0.000px;transform:scaleY(1.12);transform-origin:0 9.96px;letter-spacing:-0.2px;">Call</span>
<span class="t" id="t83" style="top:547.04px;font-size:11px;line-height:12.29px;color:#000;left:344.77px;letter-spacing:0.000px;transform:scaleY(1.12);transform-origin:0 9.96px;letter-spacing:-0.2px;">17.12.2020</span>
<span class="t" id="t84" style="top:547.04px;font-size:11px;line-height:12.29px;color:#000;left:459.88px;letter-spacing:0.000px;transform:scaleY(1.12);transform-origin:0 9.96px;letter-spacing:-0.2px;">44</span>
<span class="t" id="t85" style="top:547.04px;font-size:11px;line-height:12.29px;color:#000;left:548.10px;letter-spacing:0.000px;transform:scaleY(1.12);transform-origin:0 9.96px;letter-spacing:-0.2px;">-5</span>
<span class="t" id="t86" style="top:547.04px;font-size:11px;line-height:12.29px;color:#000;left:617.46px;letter-spacing:0.000px;transform:scaleY(1.12);transform-origin:0 9.96px;letter-spacing:-0.2px;">1210</span>
<span class="t" id="t87" style="top:547.04px;font-size:11px;line-height:12.29px;color:#000;left:720.03px;letter-spacing:0.000px;transform:scaleY(1.12);transform-origin:0 9.96px;letter-spacing:-0.2px;">33,65</span>
<span class="t" id="t88" style="top:547.04px;font-size:11px;line-height:12.29px;color:#000;left:830.11px;letter-spacing:0.000px;transform:scaleY(1.12);transform-origin:0 9.96px;letter-spacing:-0.2px;">1249,95</span>
<span class="t" id="t89" style="top:547.04px;font-size:11px;line-height:12.29px;color:#000;left:909.84px;letter-spacing:0.000px;transform:scaleY(1.12);transform-origin:0 9.96px;letter-spacing:-0.2px;">-199,75</span>
<span class="t" id="t90" style="top:547.04px;font-size:11px;line-height:12.29px;color:#000;left:985.53px;letter-spacing:0.000px;transform:scaleY(1.12);transform-origin:0 9.96px;letter-spacing:-0.2px;">34,05</span>
<span class="t" id="t91" style="top:547.04px;font-size:11px;line-height:12.29px;color:#000;left:1057.26px;letter-spacing:0.000px;transform:scaleY(1.12);transform-origin:0 9.96px;letter-spacing:-0.2px;">-0,94</span>
<span class="t" id="t92" style="top:547.04px;font-size:11px;line-height:12.29px;color:#000;left:1098.92px;letter-spacing:0.000px;transform:scaleY(1.12);transform-origin:0 9.96px;letter-spacing:-0.2px;">-0,000106</span>
<span class="t" id="t93" style="top:547.04px;font-size:11px;line-height:12.29px;color:#000;left:1154.84px;letter-spacing:0.000px;transform:scaleY(1.12);transform-origin:0 9.96px;letter-spacing:-0.2px;">-504,88</span>
<span class="t" id="t94" style="top:547.04px;font-size:11px;line-height:12.29px;color:#000;left:1199.07px;letter-spacing:0.000px;transform:scaleY(1.12);transform-origin:0 9.96px;letter-spacing:-0.2px;">194,57</span>
<span class="t" id="t95" style="top:547.04px;font-size:11px;line-height:12.29px;color:#000;left:1244.93px;letter-spacing:0.000px;transform:scaleY(1.12);transform-origin:0 9.96px;">X</span>
<span class="t" id="t96" style="top:569.04px;font-size:11px;line-height:12.29px;color:#000;left:124.60px;letter-spacing:0.000px;transform:scaleY(1.12);transform-origin:0 9.96px;letter-spacing:-0.2px;">RI90000BX0</span>
<span class="t" id="t97" style="top:569.04px;font-size:11px;line-height:12.29px;color:#000;left:285.34px;letter-spacing:0.000px;transform:scaleY(1.12);transform-origin:0 9.96px;letter-spacing:-0.2px;">Put</span>
<span class="t" id="t98" style="top:569.04px;font-size:11px;line-height:12.29px;color:#000;left:344.77px;letter-spacing:0.000px;transform:scaleY(1.12);transform-origin:0 9.96px;letter-spacing:-0.2px;">17.12.2020</span>
<span class="t" id="t99" style="top:569.04px;font-size:11px;line-height:12.29px;color:#000;left:459.88px;letter-spacing:0.000px;transform:scaleY(1.12);transform-origin:0 9.96px;letter-spacing:-0.2px;">44</span>
<span class="t" id="t100" style="top:569.04px;font-size:11px;line-height:12.29px;color:#000;left:548.10px;letter-spacing:0.000px;transform:scaleY(1.12);transform-origin:0 9.96px;letter-spacing:-0.2px;">-5</span>
<span class="t" id="t101" style="top:569.04px;font-size:11px;line-height:12.29px;color:#000;left:617.46px;letter-spacing:0.000px;transform:scaleY(1.12);transform-origin:0 9.96px;letter-spacing:-0.2px;">1220</span>
<span class="t" id="t102" style="top:569.04px;font-size:11px;line-height:12.29px;color:#000;left:720.03px;letter-spacing:0.000px;transform:scaleY(1.12);transform-origin:0 9.96px;letter-spacing:-0.2px;">47,91</span>
<span class="t" id="t103" style="top:569.04px;font-size:11px;line-height:12.29px;color:#000;left:830.11px;letter-spacing:0.000px;transform:scaleY(1.12);transform-origin:0 9.96px;letter-spacing:-0.2px;">1271,82</span>
<span class="t" id="t104" style="top:569.04px;font-size:11px;line-height:12.29px;color:#000;left:912.80px;letter-spacing:0.000px;transform:scaleY(1.12);transform-origin:0 9.96px;letter-spacing:-0.2px;">-259,1</span>
<span class="t" id="t105" style="top:569.04px;font-size:11px;line-height:12.29px;color:#000;left:985.53px;letter-spacing:0.000px;transform:scaleY(1.12);transform-origin:0 9.96px;letter-spacing:-0.2px;">48,57</span>
<span class="t" id="t106" style="top:569.04px;font-size:11px;line-height:12.29px;color:#000;left:1059.00px;letter-spacing:0.000px;transform:scaleY(1.12);transform-origin:0 9.96px;letter-spacing:-0.2px;">0,65</span>
<span class="t" id="t107" style="top:569.04px;font-size:11px;line-height:12.29px;color:#000;left:1102.50px;letter-spacing:0.000px;transform:scaleY(1.12);transform-origin:0 9.96px;letter-spacing:-0.2px;">-5,8E-05</span>
<span class="t" id="t108" style="top:569.04px;font-size:11px;line-height:12.29px;color:#000;left:1154.84px;letter-spacing:0.000px;transform:scaleY(1.12);transform-origin:0 9.96px;letter-spacing:-0.2px;">-394,62</span>
<span class="t" id="t109" style="top:569.04px;font-size:11px;line-height:12.29px;color:#000;left:1199.07px;letter-spacing:0.000px;transform:scaleY(1.12);transform-origin:0 9.96px;letter-spacing:-0.2px;">216,94</span>
<span class="t" id="t110" style="top:569.04px;font-size:11px;line-height:12.29px;color:#000;left:1244.93px;letter-spacing:0.000px;transform:scaleY(1.12);transform-origin:0 9.96px;">X</span>
<span class="t" id="t111" style="top:591.04px;font-size:11px;line-height:12.29px;color:#000;left:130.99px;letter-spacing:0.000px;transform:scaleY(1.12);transform-origin:0 9.96px;letter-spacing:-0.45px;">FixedProfit</span>
<span class="t" id="t112" style="top:591.04px;font-size:11px;line-height:12.29px;color:#000;left:924.84px;letter-spacing:0.000px;transform:scaleY(1.12);transform-origin:0 9.96px;letter-spacing:-0.2px;">0</span>
<span class="t" id="t113" style="top:591.04px;font-size:11px;line-height:12.29px;color:#000;left:1244.93px;letter-spacing:0.000px;transform:scaleY(1.12);transform-origin:0 9.96px;">X</span>
<span class="t" id="t114" style="top:613.04px;font-size:11px;line-height:12.29px;color:#000;left:139.46px;letter-spacing:0.000px;transform:scaleY(1.12);transform-origin:0 9.96px;letter-spacing:-0.2px;">Итого:</span>
<span class="t" id="t115" style="top:613.04px;font-size:11px;line-height:12.29px;color:#000;left:909.84px;letter-spacing:0.000px;transform:scaleY(1.12);transform-origin:0 9.96px;letter-spacing:-0.2px;">-458,85</span>
<span class="t" id="t116" style="top:613.04px;font-size:11px;line-height:12.29px;color:#000;left:1057.26px;letter-spacing:0.000px;transform:scaleY(1.12);transform-origin:0 9.96px;letter-spacing:-0.2px;">-0,29</span>
<span class="t" id="t117" style="top:613.04px;font-size:11px;line-height:12.29px;color:#000;left:1098.92px;letter-spacing:0.000px;transform:scaleY(1.12);transform-origin:0 9.96px;letter-spacing:-0.2px;">-0,000164</span>
<span class="t" id="t118" style="top:613.04px;font-size:11px;line-height:12.29px;color:#000;left:1157.80px;letter-spacing:0.000px;transform:scaleY(1.12);transform-origin:0 9.96px;letter-spacing:-0.2px;">-899,5</span>
<span class="t" id="t119" style="top:613.04px;font-size:11px;line-height:12.29px;color:#000;left:1199.48px;letter-spacing:0.000px;transform:scaleY(1.12);transform-origin:0 9.96px;letter-spacing:-0.2px;">411,51</span>
<span class="t" id="t120" style="top:613.04px;font-size:11px;line-height:12.29px;color:#000;left:1244.93px;letter-spacing:0.000px;transform:scaleY(1.12);transform-origin:0 9.96px;">X</span>
</div>
</body>
</html>
